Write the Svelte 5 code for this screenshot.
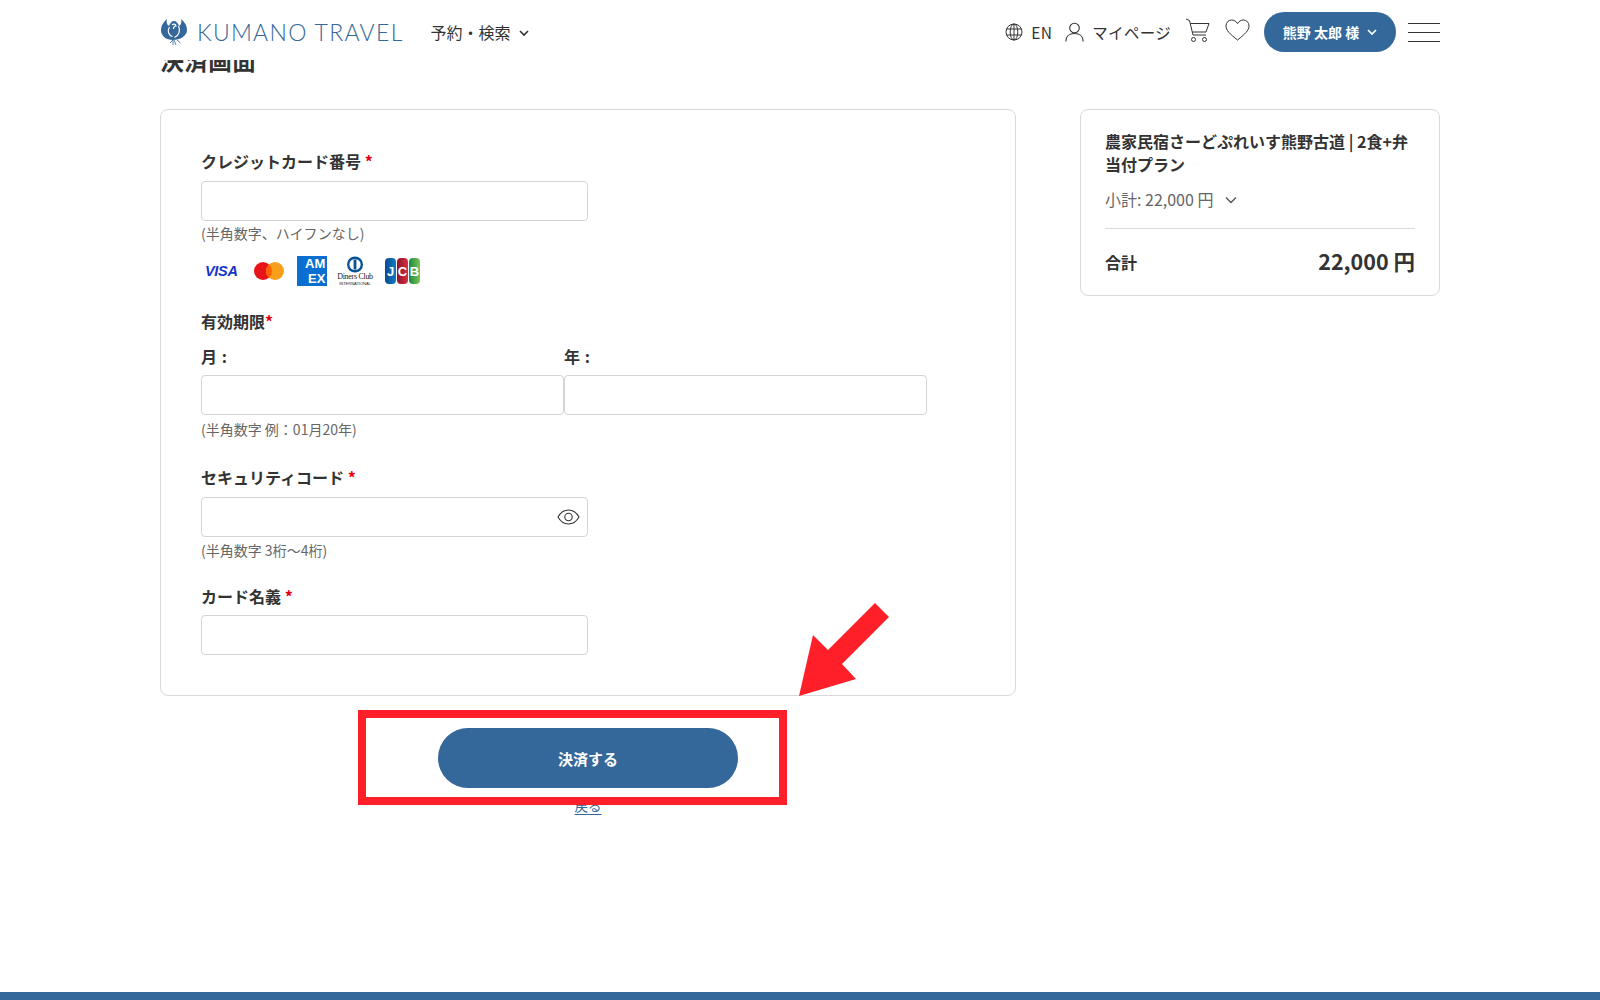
<script lang="ts">
  let showCode = $state(false);
  const brand = '#34679a';
</script>

<div class="page">
  <header class="header">
    <div class="header-inner">
      <a class="logo" href="#top">
        <svg width="28" height="28" viewBox="0 0 28 28" fill={brand}>
          <path d="M7 1C3 4 1 8 1 12c0 6 5 10 12 10 7 0 14-4 14-10 0-4-2-8-6-11 1 3 0 6-2 7-1-3-3-5-5-5-2 0-4 2-5 5-2-1-3-4-2-7z" />
          <path d="M18.500 8c2 4 1 9-4 11.500M9.500 9c-2.500 4-1 8 3 9.500M12 7c1.500-1.500 3.500-1 4 1-1.500 0-2.500 1-2.500 3" fill="none" stroke="#fff" stroke-width="1.200" />
          <path d="M10 25l3-3 0 5M14 22l2 5M17 22l3.500 3" fill="none" stroke={brand} stroke-width="0.800" />
        </svg>
        <span class="logo-text">KUMANO TRAVEL</span>
      </a>
      <button class="nav-link">
        予約・検索
        <svg class="chev" width="10" height="7" viewBox="0 0 10 7"><path d="M1 1l4 4 4-4" fill="none" stroke="currentColor" stroke-width="1.600" /></svg>
      </button>

      <div class="header-right">
        <span class="hitem lang">
          <svg width="18" height="18" viewBox="0 0 18 18" fill="none" stroke="#333" stroke-width="1">
            <circle cx="9" cy="9" r="8" />
            <ellipse cx="9" cy="9" rx="3.800" ry="8" />
            <path d="M9 1v16M1.600 6h14.800M1.600 12h14.800" />
          </svg>
          EN
        </span>
        <span class="hitem mypage">
          <svg width="19" height="20" viewBox="0 0 19 20" fill="none" stroke="#333" stroke-width="1.100">
            <circle cx="9.500" cy="6" r="4.800" />
            <path d="M0.800 19.500c0-5 3.500-8 8.700-8s8.700 3 8.700 8" />
          </svg>
          マイページ
        </span>
        <svg class="cart" width="25" height="25" viewBox="0 0 25 25" fill="none" stroke="#333" stroke-width="1">
          <path d="M1 1l3.500 1.500L8 17h13" />
          <path d="M5.500 5.500H24l-3 8.500H7.500" />
          <circle cx="8.500" cy="21.500" r="2" />
          <circle cx="19.500" cy="21.500" r="2" />
        </svg>
        <svg class="heart" width="25" height="22" viewBox="0 0 25 22" fill="none" stroke="#333" stroke-width="1">
          <path d="M12.500 21C5 15 1 11.500 1 6.800 1 3.500 3.500 1 6.700 1c2.400 0 4.500 1.300 5.800 3.600C13.800 2.300 15.900 1 18.300 1 21.500 1 24 3.500 24 6.800c0 4.700-4 8.200-11.500 14.200z" />
        </svg>
        <button class="user-btn">
          熊野 太郎 様
          <svg width="10" height="7" viewBox="0 0 10 7"><path d="M1 1l4 4 4-4" fill="none" stroke="#fff" stroke-width="1.700" /></svg>
        </button>
        <div class="burger"><span></span><span></span><span></span></div>
      </div>
    </div>
  </header>

  <main class="main">
    <h1 class="title">決済画面</h1>
    <div class="columns">
      <div class="left">
        <form class="card form-card" onsubmit={(e) => e.preventDefault()}>
          <label class="label" for="card-no">クレジットカード番号 <em>*</em></label>
          <input id="card-no" class="input" type="text" />
          <p class="hint first">(半角数字、ハイフンなし)</p>
          <div class="brands">
            <span class="visa">VISA</span>
            <svg class="mc" width="30" height="18" viewBox="0 0 30 18">
              <circle cx="9" cy="9" r="9" fill="#e8141c" />
              <circle cx="21" cy="9" r="9" fill="#f79e1b" />
              <path d="M15 2.300a9 9 0 0 1 0 13.400a9 9 0 0 1 0-13.400z" fill="#ff5f00" />
            </svg>
            <span class="amex"><span>AM</span><span class="ex">EX</span></span>
            <span class="diners">
              <svg width="18" height="17" viewBox="0 0 18 17">
                <circle cx="9" cy="8.500" r="8" fill="#0a5296" />
                <circle cx="9" cy="8.500" r="5.600" fill="#fff" />
                <rect x="7.600" y="3.500" width="2.800" height="10" fill="#0a5296" />
              </svg>
              <span class="d1">Diners Club</span>
              <span class="d2">INTERNATIONAL</span>
            </span>
            <span class="jcb">
              <span class="j">J</span><span class="c">C</span><span class="b">B</span>
            </span>
          </div>

          <div class="label expiry-label">有効期限<em>*</em></div>
          <div class="expiry">
            <div class="expiry-col">
              <label class="label sub" for="exp-m">月 :</label>
              <input id="exp-m" class="input" type="text" />
            </div>
            <div class="expiry-col">
              <label class="label sub" for="exp-y">年 :</label>
              <input id="exp-y" class="input" type="text" />
            </div>
          </div>
          <p class="hint second">(半角数字 例：01月20年)</p>

          <label class="label cvc-label" for="cvc">セキュリティコード <em>*</em></label>
          <div class="input-wrap">
            <input id="cvc" class="input" type={showCode ? 'text' : 'password'} />
            <button class="eye" type="button" aria-label="表示" onclick={() => (showCode = !showCode)}>
              <svg width="23" height="16" viewBox="0 0 23 16" fill="none" stroke="#333" stroke-width="1.100">
                <path d="M1 8c2.500-4.500 6-7 10.500-7S19.500 3.500 22 8c-2.500 4.500-6 7-10.500 7S3.500 12.500 1 8z" />
                <circle cx="11.500" cy="8" r="3.700" />
              </svg>
            </button>
          </div>
          <p class="hint">(半角数字 3桁～4桁)</p>

          <label class="label name-label" for="holder">カード名義 <em>*</em></label>
          <input id="holder" class="input" type="text" />
        </form>

        <div class="actions">
          <button class="pay">決済する</button>
          <a class="back" href="#top">戻る</a>
        </div>
      </div>

      <aside class="card summary">
        <div class="plan">農家民宿さーどぷれいす熊野古道 | 2食+弁当付プラン</div>
        <div class="subtotal">
          小計: 22,000 円
          <svg width="12" height="8" viewBox="0 0 12 8"><path d="M1 1.500l5 5 5-5" fill="none" stroke="#555" stroke-width="1.400" /></svg>
        </div>
        <div class="total">
          <span class="total-label">合計</span>
          <span class="total-value">22,000 円</span>
        </div>
      </aside>
    </div>
  </main>

  <footer class="footer"></footer>

  <!-- annotation drawn over the screenshot -->
  <div class="red-box"></div>
  <svg class="red-arrow" width="100" height="100" viewBox="0 0 100 100">
    <path d="M1 98L15 37L30 52L77 5L91 19L44 66L58 81z" fill="#ff1f29" />
  </svg>
</div>

<style>
  :global(body) {
    margin: 0;
    background: #fff;
    font-family: "Noto Sans CJK JP", "Noto Sans", sans-serif;
    color: #333;
  }
  .page {
    position: relative;
    min-height: 1000px;
    display: flex;
    flex-direction: column;
    overflow: hidden;
  }

  .header {
    position: absolute;
    top: 0;
    left: 0;
    right: 0;
    height: 60px;
    background: #fff;
    z-index: 5;
  }
  .header-inner {
    width: 1280px;
    height: 100%;
    margin: 0 auto;
    display: flex;
    align-items: center;
    padding-top: 4px;
    box-sizing: border-box;
  }
  .logo {
    display: flex;
    align-items: center;
    gap: 9px;
    text-decoration: none;
  }
  .logo-text {
    font-family: Lato, sans-serif;
    font-weight: 300;
    font-size: 23px;
    letter-spacing: 1.3px;
    color: #34679a;
    line-height: 1;
  }
  .nav-link {
    margin-left: 27px;
    border: none;
    background: none;
    padding: 0;
    font: inherit;
    font-size: 16px;
    color: #333;
    display: flex;
    align-items: center;
    gap: 8px;
  }
  .chev { margin-top: 2px; }
  .header-right {
    margin-left: auto;
    display: flex;
    align-items: center;
  }
  .hitem {
    display: flex;
    align-items: center;
    font-size: 15.500px;
    color: #333;
    letter-spacing: 0.3px;
  }
  .lang { gap: 8px; }
  .mypage { gap: 8px; margin-left: 13px; }
  .cart { margin-left: 14px; margin-top: -4px; }
  .heart { margin-left: 15px; margin-top: -4px; }
  .user-btn {
    margin-left: 14px;
    width: 132px;
    height: 40px;
    border: none;
    border-radius: 20px;
    background: #34679a;
    color: #fff;
    font: inherit;
    font-size: 14px;
    font-weight: 700;
    display: flex;
    align-items: center;
    justify-content: center;
    gap: 8px;
  }
  .burger {
    margin-left: 12px;
    width: 32px;
    display: flex;
    flex-direction: column;
    gap: 8px;
  }
  .burger span {
    display: block;
    height: 1px;
    background: #333;
  }

  .main {
    flex: 1;
    width: 1280px;
    margin: 0 auto;
  }
  .title {
    margin: 42px 0 0;
    font-size: 24px;
    line-height: 35px;
    font-weight: 700;
    color: #333;
  }
  .columns {
    margin-top: 32px;
    display: flex;
    justify-content: space-between;
    align-items: flex-start;
  }
  .left { width: 856px; }
  .card {
    border: 1px solid #d9d9d9;
    border-radius: 8px;
    box-sizing: border-box;
    background: #fff;
  }
  .form-card {
    height: 587px;
    padding: 40px;
  }
  .label {
    display: block;
    font-size: 16px;
    font-weight: 700;
    line-height: 22px;
    color: #333;
  }
  .label em {
    font-style: normal;
    color: #e60012;
  }
  .input {
    display: block;
    width: 387px;
    height: 40px;
    box-sizing: border-box;
    border: 1px solid #d4d4d4;
    border-radius: 4px;
    background: #fff;
    outline: none;
    padding: 0 12px;
    font: inherit;
  }
  .form-card > .label:first-child + .input { margin-top: 9px; }
  .hint {
    margin: 4px 0 0;
    font-size: 14px;
    line-height: 19px;
    color: #666;
  }
  .hint.first { margin-top: 3px; }
  .hint.second { margin-top: 5px; }

  .brands {
    display: flex;
    align-items: center;
    height: 32px;
    margin-top: 12px;
  }
  .visa {
    width: 40px;
    margin-left: 4px;
    font-family: "Liberation Sans", sans-serif;
    font-style: italic;
    font-weight: 700;
    font-size: 14.500px;
    color: #1434cb;
    letter-spacing: -0.3px;
  }
  .mc { margin-left: 9px; }
  .amex {
    margin-left: 13px;
    width: 30px;
    height: 30px;
    background: #0a6fd0;
    color: #fff;
    font-family: "Liberation Sans", sans-serif;
    font-weight: 700;
    font-size: 13px;
    line-height: 15px;
    display: flex;
    flex-direction: column;
    align-items: flex-start;
    justify-content: center;
    padding-left: 8px;
    box-sizing: border-box;
    overflow: hidden;
    white-space: nowrap;
  }
  .amex .ex { margin-left: 3px; }
  .diners {
    margin-left: 10px;
    width: 36px;
    display: flex;
    flex-direction: column;
    align-items: center;
    color: #222;
  }
  .d1 {
    font-family: "Liberation Serif", serif;
    font-size: 8px;
    line-height: 8px;
    white-space: nowrap;
    letter-spacing: -0.3px;
  }
  .d2 {
    font-family: "Liberation Sans", sans-serif;
    font-size: 4px;
    line-height: 5px;
    white-space: nowrap;
  }
  .jcb {
    margin-left: 12px;
    display: flex;
    gap: 1px;
    height: 26px;
  }
  .jcb span {
    width: 11px;
    border-radius: 4px;
    color: #fff;
    font-family: "Liberation Sans", sans-serif;
    font-weight: 700;
    font-size: 13px;
    line-height: 28px;
    text-align: center;
  }
  .j { background: linear-gradient(90deg, #0d4a94, #0f7cc0); }
  .c { background: linear-gradient(90deg, #8e1230, #d9313f); }
  .b { background: linear-gradient(90deg, #1c8a3c, #7cc35a); }

  .expiry-label { margin-top: 23px; }
  .expiry {
    display: flex;
    margin-top: 13px;
  }
  .expiry-col .input { width: 363px; }
  .sub {
    margin-bottom: 8px;
    letter-spacing: 0.5px;
  }
  .expiry-col { width: 363px; }

  .cvc-label { margin-top: 27px; }
  .input-wrap {
    position: relative;
    margin-top: 9px;
    width: 387px;
  }
  .eye {
    position: absolute;
    right: 8px;
    top: 12px;
    border: none;
    background: none;
    padding: 0;
    line-height: 0;
  }
  .name-label { margin-top: 25px; }
  .name-label + .input { margin-top: 8px; }

  .actions {
    display: flex;
    flex-direction: column;
    align-items: center;
  }
  .pay {
    margin-top: 32px;
    width: 300px;
    height: 60px;
    border: none;
    border-radius: 30px;
    background: #34679a;
    color: #fff;
    font: inherit;
    font-size: 15px;
    font-weight: 700;
  }
  .back {
    margin-top: 7px;
    font-size: 13.500px;
    line-height: 20px;
    color: #34679a;
    text-decoration: underline;
    text-underline-offset: 3px;
  }

  .summary {
    width: 360px;
    height: 187px;
    padding: 20px 24px;
  }
  .plan {
    font-size: 16px;
    font-weight: 700;
    line-height: 23px;
    color: #333;
  }
  .subtotal {
    margin-top: 12px;
    padding-bottom: 17px;
    border-bottom: 1px solid #d9d9d9;
    font-size: 16px;
    line-height: 23px;
    color: #666;
    display: flex;
    align-items: center;
    gap: 12px;
  }
  .total {
    margin-top: 16px;
    display: flex;
    justify-content: space-between;
    align-items: center;
  }
  .total-label {
    margin-top: 2px;
    font-size: 16px;
    font-weight: 700;
  }
  .total-value {
    font-size: 21.500px;
    font-weight: 700;
    line-height: 32px;
  }

  .footer {
    height: 8px;
    background: #34679a;
  }

  .red-box {
    position: absolute;
    left: 358px;
    top: 710px;
    width: 429px;
    height: 95px;
    box-sizing: border-box;
    border: 8px solid #ff1f29;
    z-index: 6;
  }
  .red-arrow {
    position: absolute;
    left: 798px;
    top: 598px;
    z-index: 6;
  }
</style>
